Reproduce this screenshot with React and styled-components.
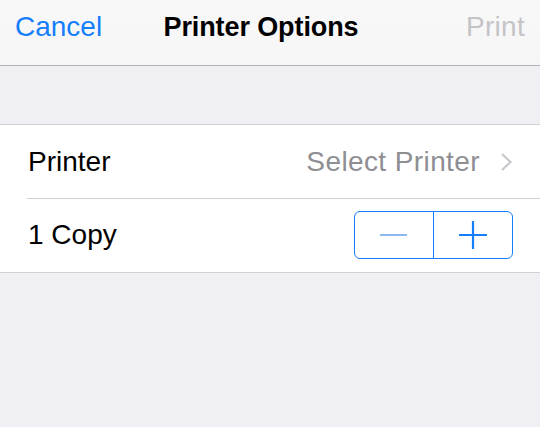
import React from "react";
import styled, { createGlobalStyle } from "styled-components";

const Global = createGlobalStyle`
  html, body { margin: 0; padding: 0; }
  body {
    background: #efeff4;
    font-family: "Liberation Sans", Arial, sans-serif;
    -webkit-font-smoothing: antialiased;
  }
`;

const Screen = styled.div`
  width: 540px;
  height: 427px;
  background: #efeff4;
  overflow: hidden;
`;

const NavBar = styled.div`
  height: 66px;
  box-sizing: border-box;
  border-bottom: 1px solid #b2b2b6;
  background: linear-gradient(#f8f8f9, #f6f6f7);
  display: grid;
  grid-template-columns: 1fr auto 1fr;
  align-items: center;
  padding: 0 15px 11px 15px;
`;

const NavButton = styled.span`
  font-size: 28px;
  color: ${(p) => (p.$disabled ? "#c4c4c6" : "#157efb")};
  justify-self: ${(p) => (p.$right ? "end" : "start")};
  letter-spacing: ${(p) => (p.$right ? "0.3px" : "0")};
`;

const Title = styled.span`
  font-size: 27px;
  font-weight: 700;
  color: #000;
  letter-spacing: -0.1px;
  margin-right: 18px;
`;

const Spacer = styled.div`
  height: 58px;
`;

const Group = styled.div`
  background: #fff;
  border-top: 1px solid #d1d1d5;
  border-bottom: 1px solid #d1d1d5;
`;

const Row = styled.div`
  height: 73px;
  display: flex;
  align-items: center;
  justify-content: space-between;
  padding: 0 27px 0 28px;
  position: relative;
  box-sizing: border-box;
  & + & {
    height: 74px;
  }
  & + &::before {
    content: "";
    position: absolute;
    top: 0;
    left: 27px;
    right: 0;
    height: 1px;
    background: #d1d1d5;
  }
`;

const Label = styled.span`
  font-size: 28px;
  color: #000;
`;

const Detail = styled.span`
  display: flex;
  align-items: center;
  gap: 20px;
  font-size: 28px;
  color: #8e8e93;
  letter-spacing: 0.4px;
`;

const Stepper = styled.div`
  display: flex;
  width: 159px;
  height: 48px;
  box-sizing: border-box;
  border: 1.5px solid #157efb;
  border-radius: 6px;
`;

const StepButton = styled.button`
  flex: 1;
  background: transparent;
  border: none;
  padding: 0;
  display: flex;
  align-items: center;
  justify-content: center;
  & + & {
    border-left: 1.5px solid #157efb;
  }
`;

const Chevron = () => (
  <svg width="13" height="20" viewBox="0 0 13 20">
    <path d="M2 2 L10.5 10 L2 18" fill="none" stroke="#c7c7cc" strokeWidth="2.2" />
  </svg>
);

const Minus = () => (
  <svg width="28" height="28" viewBox="0 0 28 28">
    <path d="M0 14 H27" stroke="#8bb9f1" strokeWidth="2" />
  </svg>
);

const Plus = () => (
  <svg width="28" height="28" viewBox="0 0 28 28">
    <path d="M0 14 H28 M14 0 V28" stroke="#157efb" strokeWidth="2.2" />
  </svg>
);

export default function App() {
  return (
    <Screen>
      <Global />
      <NavBar>
        <NavButton>Cancel</NavButton>
        <Title>Printer Options</Title>
        <NavButton $right $disabled>
          Print
        </NavButton>
      </NavBar>
      <Spacer />
      <Group>
        <Row>
          <Label>Printer</Label>
          <Detail>
            Select Printer
            <Chevron />
          </Detail>
        </Row>
        <Row>
          <Label>1 Copy</Label>
          <Stepper>
            <StepButton aria-label="Decrease">
              <Minus />
            </StepButton>
            <StepButton aria-label="Increase">
              <Plus />
            </StepButton>
          </Stepper>
        </Row>
      </Group>
    </Screen>
  );
}
